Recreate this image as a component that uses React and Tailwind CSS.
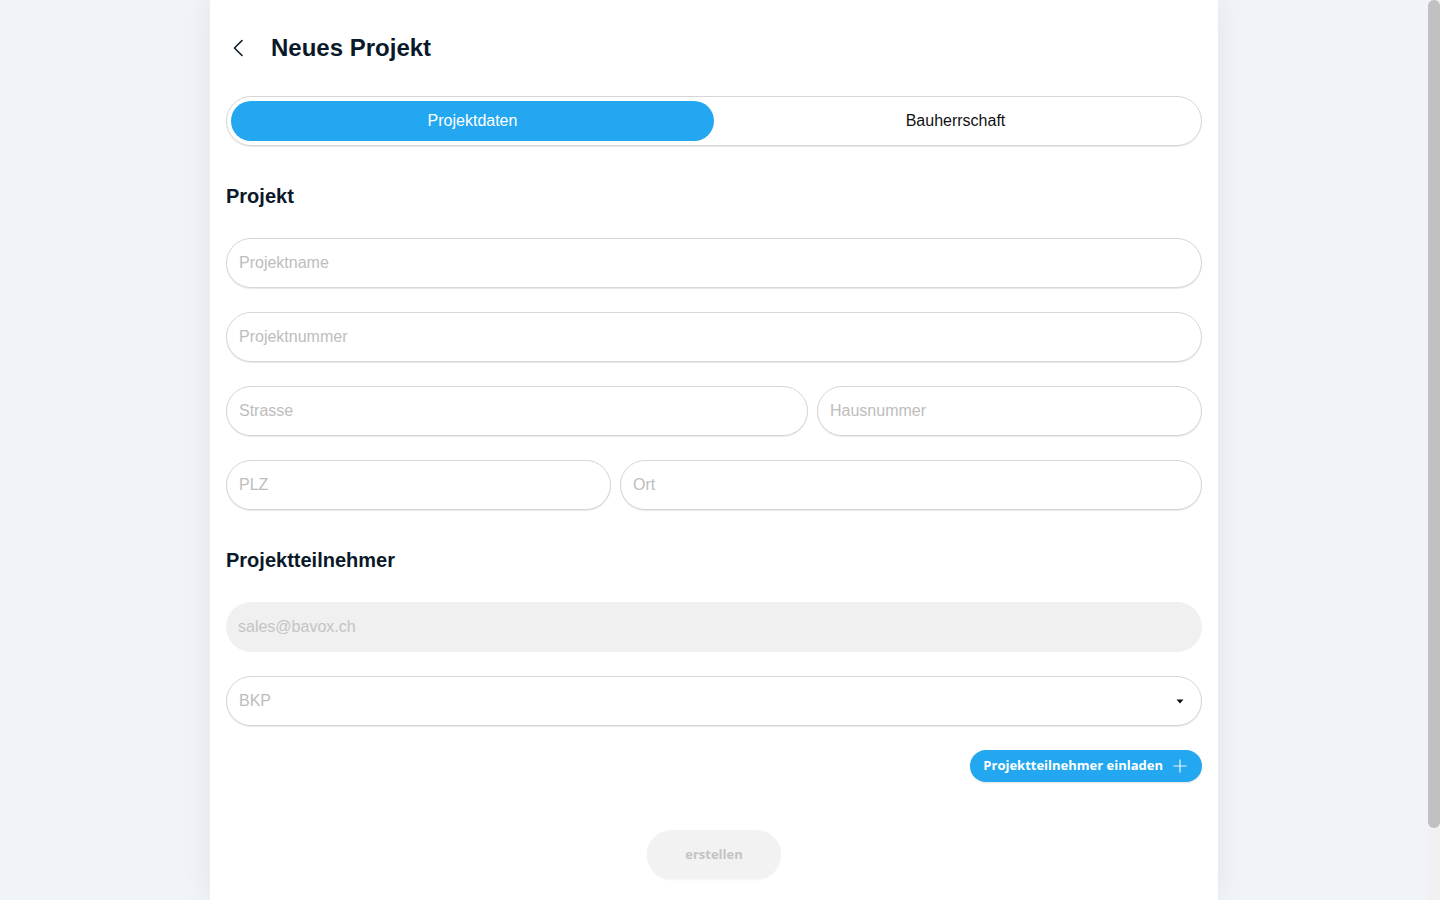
import React from "react";

function Field({ placeholder, className = "" }) {
  return (
    <div
      className={`h-[50px] rounded-full border border-[#d6d6d6] shadow-[0_1px_1px_rgba(0,0,0,0.09)] bg-white flex items-center px-[12px] ${className}`}
    >
      <span className="text-[16px] text-[#bdbdbd]">{placeholder}</span>
    </div>
  );
}

export default function App() {
  return (
    <div
      className="h-[900px] w-full flex overflow-hidden bg-[#f0f4f9]"
      style={{ fontFamily: '"Liberation Sans", Arial, sans-serif' }}
    >
      <div className="flex-1 flex justify-center">
        <div className="w-[1008px] h-full bg-white shadow-[0_0_30px_rgba(0,0,0,0.07)] px-[16px]">
          {/* Header */}
          <div className="pt-[30px] h-[66px] flex items-center">
            <div className="w-[45px] flex items-center pl-[6px]">
              <svg width="12" height="18" viewBox="0 0 12 18" fill="none">
                <path d="M10 1.5 L2.5 9 L10 16.5" stroke="#0c1b2c" strokeWidth="1.6" strokeLinecap="round" strokeLinejoin="round" />
              </svg>
            </div>
            <h1 className="text-[24px] font-bold text-[#0a1929] leading-[36px]">Neues Projekt</h1>
          </div>

          {/* Tabs */}
          <div className="mt-[30px] h-[50px] rounded-full border border-[#d6d6d6] shadow-[0_1px_1px_rgba(0,0,0,0.09)] p-[4px] flex">
            <div className="flex-1 rounded-full bg-[#22a7f0] flex items-center justify-center text-white text-[16px]">
              Projektdaten
            </div>
            <div className="flex-1 rounded-full flex items-center justify-center text-[#111] text-[16px]">
              Bauherrschaft
            </div>
          </div>

          <h2 className="mt-[36px] text-[20px] leading-[28px] font-bold text-[#0a1929]">Projekt</h2>

          <div className="mt-[28px] flex flex-col gap-[24px]">
            <Field placeholder="Projektname" />
            <Field placeholder="Projektnummer" />
            <div className="flex gap-[9px]">
              <Field placeholder="Strasse" className="w-[582px]" />
              <Field placeholder="Hausnummer" className="flex-1" />
            </div>
            <div className="flex gap-[9px]">
              <Field placeholder="PLZ" className="w-[385px]" />
              <Field placeholder="Ort" className="flex-1" />
            </div>
          </div>

          <h2 className="mt-[36px] text-[20px] leading-[28px] font-bold text-[#0a1929]">Projektteilnehmer</h2>

          <div className="mt-[28px] flex flex-col gap-[24px]">
            <div className="h-[50px] rounded-full bg-[#f0f0f0] flex items-center px-[12px]">
              <span className="text-[16px] text-[#c4c4c4]">sales@bavox.ch</span>
            </div>
            <div className="h-[50px] rounded-full border border-[#d6d6d6] shadow-[0_1px_1px_rgba(0,0,0,0.09)] bg-white flex items-center justify-between pl-[12px] pr-[17px]">
              <span className="text-[16px] text-[#bdbdbd]">BKP</span>
              <svg width="8" height="5" viewBox="0 0 8 5">
                <path d="M0.5 0.5 L7.5 0.5 L4 4.5 Z" fill="#111" />
              </svg>
            </div>
          </div>

          <div className="mt-[24px] flex justify-end">
            <div
              className="h-[32px] rounded-full bg-[#22a7f0] flex items-center pl-[13px] pr-[15px] gap-[10px] text-white text-[13px] font-bold shadow-[0_1px_2px_rgba(0,0,0,0.12)]"
              style={{ fontFamily: '"Open Sans", "Noto Sans", sans-serif' }}
            >
              <span>Projektteilnehmer einladen</span>
              <svg width="14" height="14" viewBox="0 0 14 14">
                <path d="M7 0.5 V13.5 M0.5 7 H13.5" stroke="white" strokeWidth="1.2" strokeOpacity="0.9" />
              </svg>
            </div>
          </div>

          <div className="mt-[48px] flex justify-center">
            <div
              className="w-[134px] h-[49px] rounded-full bg-[#f2f2f2] flex items-center justify-center text-[#c4c4c4] text-[13px] font-bold shadow-[0_1px_2px_rgba(0,0,0,0.05)]"
              style={{ fontFamily: '"Open Sans", "Noto Sans", sans-serif' }}
            >
              erstellen
            </div>
          </div>
        </div>
      </div>

      {/* Scrollbar */}
      <div className="w-[12px] h-full bg-[#f1f1f1] flex flex-col">
        <div className="h-[828px] w-full bg-[#c1c1c1] rounded-t-[6px] rounded-b-[6px]" />
      </div>
    </div>
  );
}
